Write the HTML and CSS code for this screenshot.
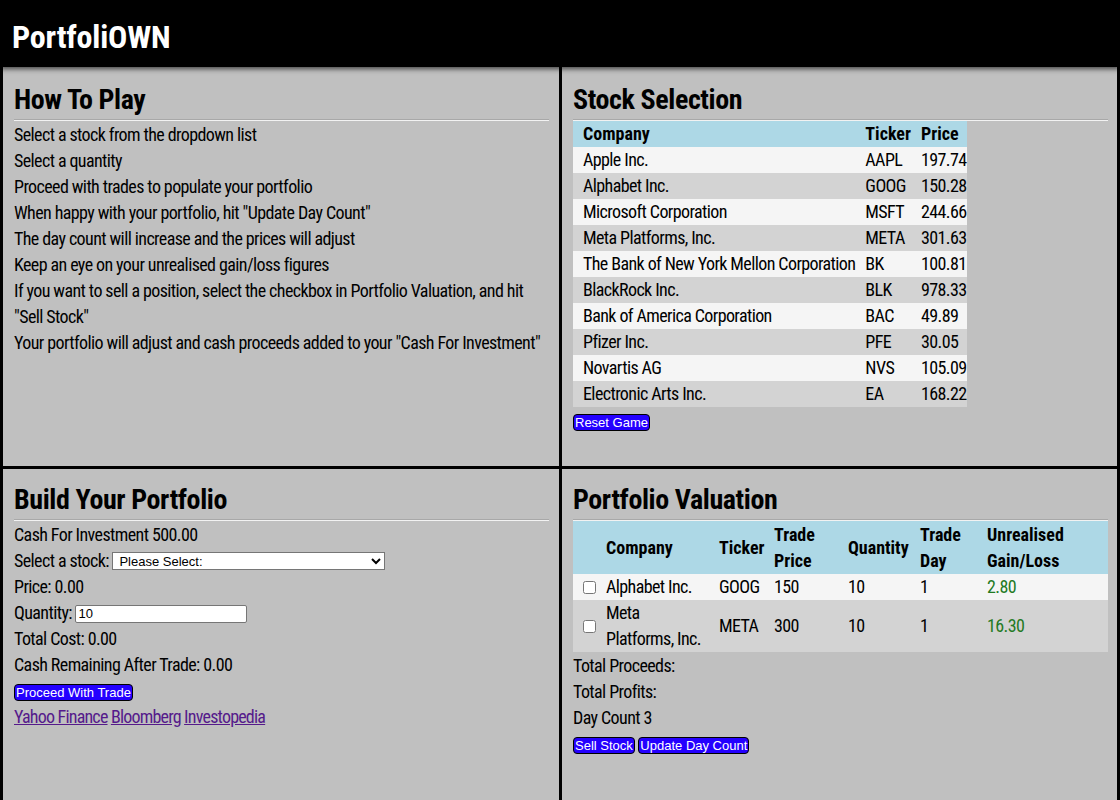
FILE: index.html
```html
<!DOCTYPE html>
<html lang="en">
<head>
<meta charset="utf-8">
<title>PortfoliOWN</title>
<link rel="stylesheet" href="styles.css">
</head>
<body>
<header class="topbar">
  <h1 class="brand">PortfoliOWN</h1>
</header>
<main class="board">
  <section class="panel panel-top">
    <h2 class="panel-title">How To Play</h2>
    <hr class="rule">
    <div class="copy">
      <div>Select a stock from the dropdown list</div>
      <div>Select a quantity</div>
      <div>Proceed with trades to populate your portfolio</div>
      <div>When happy with your portfolio, hit "Update Day Count"</div>
      <div>The day count will increase and the prices will adjust</div>
      <div>Keep an eye on your unrealised gain/loss figures</div>
      <div>If you want to sell a position, select the checkbox in Portfolio Valuation, and hit "Sell Stock"</div>
      <div>Your portfolio will adjust and cash proceeds added to your "Cash For Investment"</div>
    </div>
  </section>
  <section class="panel panel-top">
    <h2 class="panel-title">Stock Selection</h2>
    <hr class="rule">
    <table class="stocks">
      <thead>
        <tr><th>Company</th><th>Ticker</th><th>Price</th></tr>
      </thead>
      <tbody>
        <tr><td>Apple Inc.</td><td>AAPL</td><td>197.74</td></tr>
        <tr><td>Alphabet Inc.</td><td>GOOG</td><td>150.28</td></tr>
        <tr><td>Microsoft Corporation</td><td>MSFT</td><td>244.66</td></tr>
        <tr><td>Meta Platforms, Inc.</td><td>META</td><td>301.63</td></tr>
        <tr><td>The Bank of New York Mellon Corporation</td><td>BK</td><td>100.81</td></tr>
        <tr><td>BlackRock Inc.</td><td>BLK</td><td>978.33</td></tr>
        <tr><td>Bank of America Corporation</td><td>BAC</td><td>49.89</td></tr>
        <tr><td>Pfizer Inc.</td><td>PFE</td><td>30.05</td></tr>
        <tr><td>Novartis AG</td><td>NVS</td><td>105.09</td></tr>
        <tr><td>Electronic Arts Inc.</td><td>EA</td><td>168.22</td></tr>
      </tbody>
    </table>
    <div class="copy"><button class="btn" type="button">Reset Game</button></div>
  </section>
  <section class="panel panel-bottom">
    <h2 class="panel-title">Build Your Portfolio</h2>
    <hr class="rule">
    <div class="copy">
      <div>Cash For Investment 500.00</div>
      <div class="field-row">Select a stock: <select class="picker"><option>Please Select:</option></select></div>
      <div>Price: 0.00</div>
      <div class="field-row">Quantity: <input class="qty" type="text" value="10"></div>
      <div>Total Cost: 0.00</div>
      <div>Cash Remaining After Trade: 0.00</div>
      <div><button class="btn" type="button">Proceed With Trade</button></div>
      <div class="links"><a href="#yahoo">Yahoo Finance</a> <a href="#bloomberg">Bloomberg</a> <a href="#investopedia">Investopedia</a></div>
    </div>
  </section>
  <section class="panel panel-bottom">
    <h2 class="panel-title">Portfolio Valuation</h2>
    <hr class="rule">
    <table class="holdings">
      <colgroup>
        <col class="c-check"><col class="c-company"><col class="c-ticker"><col class="c-price"><col class="c-qty"><col class="c-day"><col>
      </colgroup>
      <thead>
        <tr><th></th><th>Company</th><th>Ticker</th><th>Trade Price</th><th>Quantity</th><th>Trade Day</th><th>Unrealised Gain/Loss</th></tr>
      </thead>
      <tbody>
        <tr><td><input class="tick" type="checkbox"></td><td>Alphabet Inc.</td><td>GOOG</td><td>150</td><td>10</td><td>1</td><td class="gain">2.80</td></tr>
        <tr><td><input class="tick" type="checkbox"></td><td>Meta Platforms, Inc.</td><td>META</td><td>300</td><td>10</td><td>1</td><td class="gain">16.30</td></tr>
      </tbody>
    </table>
    <div class="copy">
      <div>Total Proceeds:</div>
      <div>Total Profits:</div>
      <div>Day Count 3</div>
      <div class="actions"><button class="btn" type="button">Sell Stock</button> <button class="btn" type="button">Update Day Count</button></div>
    </div>
  </section>
</main>
</body>
</html>
```
FILE: styles.css
```css
html, body {
  margin: 0;
  padding: 0;
  background: #000;
}

body {
  font-family: "Roboto Condensed", "DejaVu Sans Condensed", sans-serif;
  font-size: 18px;
  color: #000;
}

.topbar {
  position: relative;
  z-index: 2;
  height: 67px;
  box-sizing: border-box;
  padding: 7px 12px 0;
  background: #000;
  box-shadow: 0 2px 5px rgba(0, 0, 0, 0.65);
}

.brand {
  margin: 0;
  font-size: 32px;
  font-weight: bold;
  line-height: 60px;
  letter-spacing: -0.2px;
  color: #fff;
}

.board {
  display: grid;
  grid-template-columns: 556px 1fr;
  grid-template-rows: 399px 399px;
  gap: 3px;
  padding: 0 3px;
}

.panel {
  background: #c0c0c0;
  padding: 14px 9px 0 11px;
  min-width: 0;
}

.panel-top {
  padding-top: 16px;
}

.panel:nth-child(odd) {
  padding-right: 10px;
}

.panel-title {
  margin: 0;
  font-size: 28px;
  font-weight: bold;
  line-height: 34px;
  letter-spacing: -0.4px;
}

.rule {
  margin: 2px 0 0;
  height: 0;
  border: 0;
  border-top: 1px solid #a8a8a8;
  border-bottom: 1px solid #f2f2f2;
}

.copy {
  line-height: 26px;
  letter-spacing: -0.6px;
  padding-top: 1px;
}

.stocks,
.holdings {
  border-collapse: collapse;
  line-height: 26px;
}

.stocks th,
.stocks td,
.holdings th,
.holdings td {
  padding: 0 0 0 10px;
  text-align: left;
  vertical-align: middle;
}

.stocks td,
.holdings td {
  letter-spacing: -0.6px;
}

.stocks th,
.holdings th {
  font-weight: bold;
}

.stocks thead tr,
.holdings thead tr {
  background: #add8e6;
}

.stocks tbody tr:nth-child(odd),
.holdings tbody tr:nth-child(odd) {
  background: #f5f5f5;
}

.stocks tbody tr:nth-child(even),
.holdings tbody tr:nth-child(even) {
  background: #d3d3d3;
}

.holdings {
  width: 100%;
  table-layout: fixed;
}

.holdings thead tr {
  height: 53px;
}

.c-check { width: 23px; }
.c-company { width: 113px; }
.c-ticker { width: 55px; }
.c-price { width: 74px; }
.c-qty { width: 72px; }
.c-day { width: 67px; }

.tick {
  display: block;
  width: 13px;
  height: 13px;
  margin: 0;
}

.gain {
  color: #237a23;
}

.btn {
  font-family: "Liberation Sans", Arial, sans-serif;
  font-size: 13px;
  line-height: 15px;
  letter-spacing: normal;
  padding: 0 1px;
  color: #fff;
  background: #2400ff;
  border: 1.5px solid #000;
  border-radius: 4px;
  cursor: pointer;
}

.picker {
  font-family: "Liberation Sans", Arial, sans-serif;
  font-size: 13px;
  letter-spacing: normal;
  width: 273px;
  height: 18px;
  padding: 0 0 0 2px;
  border: 1px solid #767676;
  border-radius: 0;
  background: #fff;
  color: #000;
  vertical-align: 1px;
}

.qty {
  font-family: "Liberation Sans", Arial, sans-serif;
  font-size: 13px;
  letter-spacing: normal;
  width: 172px;
  height: 18px;
  box-sizing: border-box;
  padding: 0 2px;
  border: 1px solid #767676;
  border-radius: 2px;
  background: #fff;
  color: #000;
  vertical-align: 1px;
}

.links {
  letter-spacing: -0.8px;
}

.links a {
  color: #551a8b;
  text-decoration: underline;
}
```
